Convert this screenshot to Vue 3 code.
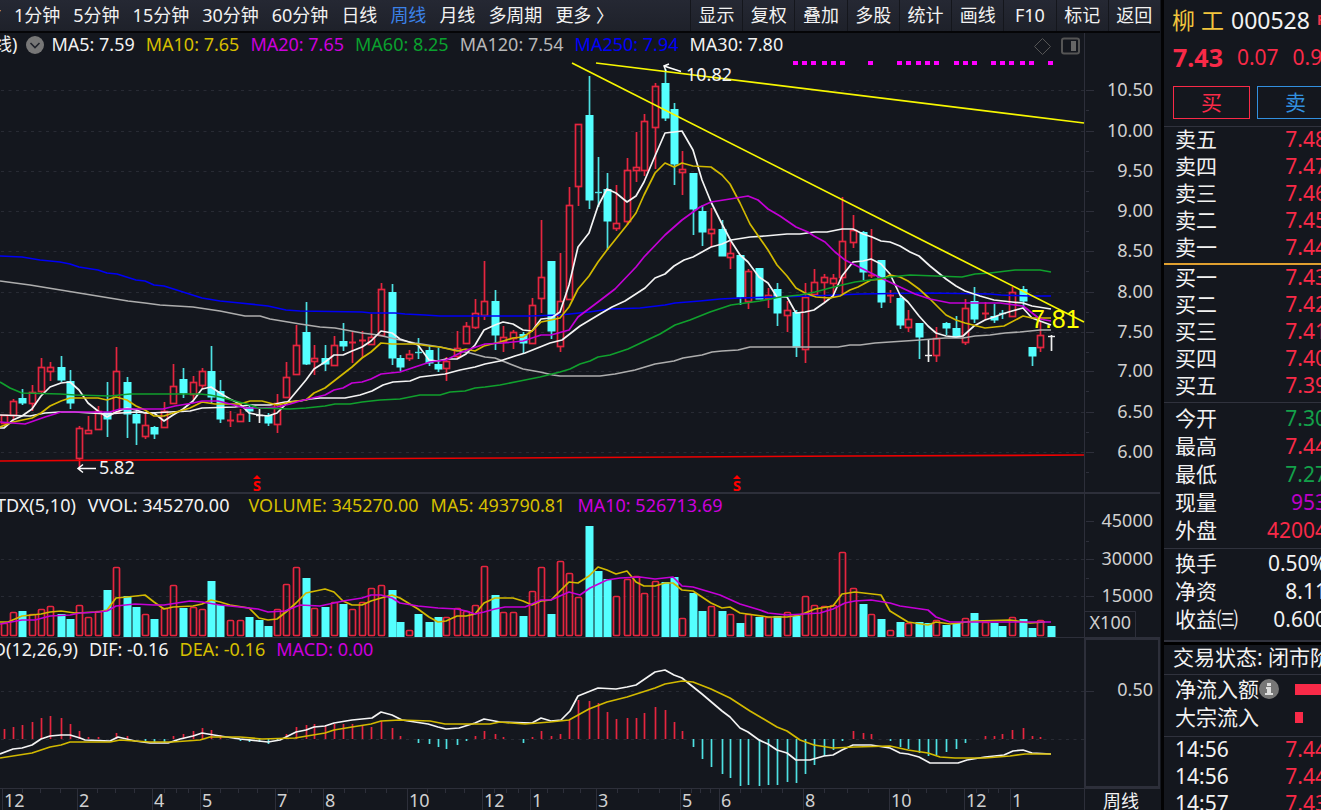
<script setup>
const periods = ['分时', '1分钟', '5分钟', '15分钟', '30分钟', '60分钟', '日线', '周线', '月线', '多周期', '更多 〉']
const tools = ['显示', '复权', '叠加', '多股', '统计', '画线', 'F10', '标记', '返回']

const maLegend = [
  ['MA5: 7.59', 'white'], ['MA10: 7.65', 'yellow'], ['MA20: 7.65', 'magenta'], ['MA60: 8.25', 'green'],
  ['MA120: 7.54', 'silver'], ['MA250: 7.94', 'blue'], ['MA30: 7.80', 'white']
]
const volLegend = [
  ['VVOL: 345270.00', 'white'], ['VOLUME: 345270.00', 'yellow wide'],
  ['MA5: 493790.81', 'yellow'], ['MA10: 526713.69', 'magenta']
]
const macdLegend = [['DIF: -0.16', 'white'], ['DEA: -0.16', 'yellow'], ['MACD: 0.00', 'magenta']]

// x, kind (r rising, c falling, w flat), high, low, body top, body bottom, volume top, macd end
const bars = `4 r 415 423 415 423 623 729
13 r 399 420 401 415 612 727
22 c 389 405 398 403 611 725
32 r 385 411 392 403 614 722
41 r 358 393 367 391 609 718
50 r 362 381 367 371 606 716
61 c 356 382 367 380 614 718
70 c 370 409 381 403 619 724
79 r 426 467 428 458 605 731
88 r 416 433 430 433 617 737
98 r 406 429 411 429 611 737
107 c 382 437 412 419 590 739
116 r 347 412 371 412 567 733
127 c 377 438 382 414 596 736
136 c 409 445 414 423 607 739
145 r 414 439 425 436 614 742
154 c 426 439 427 434 619 743
164 r 402 427 411 427 608 743
173 r 364 403 386 403 585 736
183 c 368 398 379 393 608 734
193 r 376 400 382 394 607 731
202 r 368 389 371 385 609 728
211 c 346 403 371 397 581 730
220 c 380 423 391 419 605 735
230 r 411 427 420 421 620 739
240 r 409 422 414 421 620 741
249 c 406 422 407 411 617 742
259 w 409 423 415 416 620 742
268 c 413 426 415 423 626 744
277 r 394 433 403 424 609 740
286 r 362 397 377 397 584 734
296 r 325 374 345 374 567 727
306 c 302 365 332 364 578 725
314 r 345 375 358 361 608 724
325 c 345 371 358 364 607 726
334 r 336 365 345 365 602 724
343 c 323 351 341 346 604 724
352 r 332 363 342 343 609 724
362 r 331 358 340 341 602 725
371 r 314 344 337 344 588 727
381 r 283 335 289 335 585 721
392 c 284 365 292 358 590 728
400 c 355 371 358 367 622 736
409 r 350 361 354 358 630 739
418 c 338 359 352 353 614 743
429 c 346 366 350 363 622 744
438 c 348 372 364 369 617 747
446 r 357 381 361 368 617 749
457 r 331 358 348 356 608 745
466 r 322 343 326 343 611 741
475 r 299 329 313 327 605 736
484 r 261 320 301 315 566 731
495 c 290 350 301 335 595 734
503 r 326 352 337 341 612 737
513 r 330 349 332 338 612 739
523 c 332 353 334 343 616 743
532 r 298 343 305 343 591 737
541 r 220 313 277 298 567 731
551 c 261 339 261 331 614 736
560 r 253 352 301 346 561 734
569 r 187 300 205 299 573 720
578 r 124 206 124 186 597 700
589 c 76 209 115 200 526 701
598 c 157 207 192 193 571 703
607 c 173 250 189 221 579 712
616 r 185 231 223 228 596 719
627 r 158 225 170 221 579 718
636 r 132 182 167 170 576 718
644 r 114 176 121 170 593 713
655 r 83 169 86 127 581 707
665 c 69 121 83 118 582 710
674 c 103 185 109 164 577 722
682 r 151 195 169 172 618 731
693 c 173 235 173 209 593 747
702 c 205 246 211 232 611 759
711 r 208 247 229 233 606 767
722 c 220 256 229 256 611 774
730 r 242 269 253 257 614 778
740 c 255 305 255 297 623 786
748 r 269 309 271 301 614 785
759 c 268 299 268 299 617 786
768 r 288 308 295 298 617 785
777 c 283 326 289 313 616 785
787 r 301 332 310 315 612 782
796 c 310 357 312 347 616 783
805 r 283 363 297 349 596 774
814 r 269 295 282 294 605 765
824 r 274 302 277 282 606 756
833 r 274 297 278 283 605 750
842 r 197 294 241 277 552 741
853 r 215 248 230 242 588 731
863 c 231 280 232 272 604 733
871 r 229 278 275 276 614 734
881 c 260 308 260 302 619 739
890 r 290 303 295 297 630 741
900 c 295 329 298 325 622 747
908 r 310 332 319 327 623 749
919 c 323 359 323 337 622 753
928 w 340 362 355 356 623 756
936 r 327 362 338 355 620 755
946 c 322 335 323 328 625 752
956 c 316 337 328 337 623 749
965 r 299 345 308 342 618 743
974 c 287 323 301 319 613 739
985 r 302 320 313 315 622 736
994 c 304 323 316 320 623 736
1002 c 310 319 313 315 626 734
1012 r 287 317 292 316 617 730
1023 c 286 309 289 301 619 728
1032 c 347 366 347 356 628 736
1040 r 322 352 335 347 620 737
1051 w 335 351 336 337 626 739`
  .split('\n')
  .map((row) => {
    const [x, kind, ...n] = row.trim().split(' ')
    const [high, low, top, bottom, vol, macd] = n.map(Number)
    return { x: Number(x), kind, high, low, top, bottom, vol, macd, flat: bottom - top <= 2 }
  })

const priceLines = [
  ['line-blue', '0,256 22,257 40,260 60,262 70,264 79,267 98,270 107,273 117,274 136,280 145,281 154,285 164,286 202,298 220,301 240,303 268,306 286,310 300,311 362,312 371,313 395,313 405,314 425,315 440,316 530,316 560,315 589,312 610,309 640,308 665,305 675,303 700,301 720,299 740,298 780,297 810,296 837,295 860,294 928,293 990,294 1001,295 1030,296 1051,296'],
  ['line-silver', '0,281 30,285 79,293 128,301 145,303 160,305 193,307 220,311 245,316 260,316 270,319 300,324 320,327 335,328 362,333 378,335 400,340 415,343 440,347 450,349 470,353 485,357 495,358 510,364 523,369 540,372 553,375 560,376 600,376 615,374 635,370 655,364 674,361 683,358 702,355 712,352 722,351 738,350 750,347 838,347 850,345 860,345 875,343 905,341 920,340 945,338 963,338 975,336 990,335 1005,333 1020,332 1040,330 1051,330'],
  ['line-red', '0,461 273,459 505,458 852,456 1084,455'],
  ['line-white', '0,415 30,416 45,413 60,412 75,412 107,414 135,412 150,413 190,411 202,408 235,407 250,405 270,405 285,402 300,401 310,399 320,398 345,398 360,395 372,391 383,385 393,382 410,381 420,377 445,374 460,370 475,367 485,364 500,361 515,356 525,353 540,347 550,343 562,340 580,326 600,314 612,307 625,301 645,288 655,278 665,274 674,266 684,260 693,257 711,247 722,244 731,240 750,237 765,236 787,234 800,234 815,232 827,232 842,229 853,229 863,234 872,237 881,241 890,242 900,246 910,252 919,256 930,266 946,279 956,286 965,291 980,296 994,300 1012,302 1023,303 1032,306 1051,309'],
  ['line-white', '0,428 4,428 13,420 22,416 32,409 41,396 50,387 61,383 70,382 79,390 88,403 98,411 107,417 116,412 127,408 136,410 145,413 154,413 164,421 173,415 183,409 193,401 202,389 211,387 220,393 230,399 240,404 249,413 259,415 268,416 277,413 286,404 296,392 306,380 314,369 325,362 334,355 343,355 352,351 362,347 371,341 381,331 392,333 400,339 409,342 418,345 429,360 438,361 446,359 457,359 466,354 475,345 484,330 495,325 503,322 513,324 523,330 532,331 541,319 551,318 560,312 569,285 578,247 589,233 598,206 607,189 616,193 627,202 636,196 644,182 655,156 665,133 674,132 682,131 693,150 702,180 711,202 722,224 731,241 740,255 748,262 759,277 768,283 777,297 787,297 796,313 805,312 814,310 824,303 833,296 842,276 853,262 863,261 871,259 881,264 890,274 900,295 908,302 919,316 928,326 936,333 946,336 956,337 963,336 974,326 985,320 994,317 1002,314 1012,311 1023,308 1032,318 1040,321 1051,325'],
  ['line-yellow', '0,427 13,422 32,418 41,413 50,406 61,401 70,398 98,398 107,400 116,397 127,400 136,406 145,410 154,416 164,416 173,413 190,408 202,402 215,404 240,404 250,401 262,401 277,405 296,401 306,400 314,393 325,388 334,381 343,374 352,367 362,358 371,352 381,343 392,344 415,344 429,346 440,347 457,351 466,349 475,351 484,346 500,342 513,338 523,337 532,331 541,322 551,320 560,318 569,307 578,289 589,276 598,262 607,250 627,225 636,213 644,195 655,173 665,163 674,167 682,163 693,166 711,167 722,175 730,184 740,203 750,224 768,250 777,265 787,276 796,288 805,293 816,297 830,298 840,296 850,290 858,287 871,280 883,279 890,275 900,277 908,281 919,289 930,299 938,307 946,315 956,320 965,323 985,328 1004,326 1023,316 1032,318 1051,318'],
  ['line-magenta', '0,422 25,424 45,417 61,412 110,412 120,409 163,409 175,406 193,403 202,401 218,401 230,404 245,408 260,408 277,407 290,404 300,401 325,395 334,390 343,388 352,383 362,382 371,379 381,374 400,372 415,367 430,362 446,360 460,353 470,349 485,344 503,343 523,341 541,335 551,335 569,330 578,317 598,302 615,289 636,267 644,257 665,235 682,220 700,207 711,202 730,199 748,196 758,200 768,209 780,216 796,227 808,232 814,236 825,242 835,252 845,260 863,269 881,278 900,287 915,294 930,299 950,303 1000,303 1023,306 1040,319 1051,321'],
  ['line-green', '0,382 10,388 22,393 60,394 75,395 110,396 130,394 200,394 210,395 220,397 235,401 250,405 258,408 290,409 306,408 325,406 335,404 350,404 362,402 380,400 400,399 420,395 440,395 450,392 465,391 475,388 485,387 500,385 520,381 540,377 560,372 570,369 580,364 590,361 598,357 610,355 628,349 645,341 660,334 675,325 690,320 710,312 731,305 760,301 780,297 800,295 815,292 830,288 842,285 855,282 870,280 890,277 910,275 962,277 975,274 990,273 1015,270 1040,270 1051,272'],
  ['line-trend', '572,63 1084,322'],
  ['line-trend', '596,63 1084,123']
]
const volLines = [
  ['line-yellow', '0,622 8,622 22,616 41,614 50,612 61,611 75,613 98,612 107,610 116,598 127,597 145,595 154,602 164,609 173,607 193,606 202,604 211,600 220,602 230,605 249,608 259,618 268,620 277,619 286,612 296,603 306,593 325,589 334,592 343,601 352,605 362,605 371,601 381,598 392,595 400,598 418,609 429,617 438,622 446,621 457,616 466,616 475,614 484,603 495,598 513,598 523,601 532,605 541,601 551,600 560,591 569,582 578,583 589,576 598,567 607,570 616,574 627,571 636,582 644,586 655,586 665,583 673,583 682,590 693,591 702,597 711,603 722,608 730,607 740,613 768,617 787,617 800,615 815,609 833,606 842,594 855,592 881,595 890,611 908,622 928,625 936,622 950,624 975,621 1010,620 1030,623 1045,622'],
  ['line-magenta', '0,624 22,620 35,620 50,616 70,615 80,613 98,612 107,611 116,606 135,604 154,605 164,605 190,601 202,602 220,605 240,607 258,609 268,612 285,611 300,605 320,606 343,601 362,598 371,595 381,595 392,598 400,603 418,606 438,608 457,609 466,611 475,614 484,612 495,609 505,607 525,607 541,600 551,600 569,592 580,595 590,588 607,580 620,578 640,577 655,579 673,577 682,586 693,587 720,595 740,604 760,610 768,613 787,615 820,613 833,609 845,603 855,601 871,600 890,603 900,606 928,610 936,617 950,622 1051,622']
]
const macdLines = [
  ['line-white', '0,754 13,749 22,748 32,745 41,739 50,736 61,735 70,735 80,738 85,740 110,741 118,737 135,741 150,743 168,743 180,739 193,736 202,733 220,736 240,739 268,742 280,740 290,735 296,732 306,730 314,727 325,726 334,723 352,720 372,718 381,712 392,715 402,720 428,724 438,727 446,729 459,728 475,723 484,719 500,722 532,723 541,718 551,721 561,720 570,711 578,696 598,688 616,689 627,687 636,685 655,672 665,670 674,675 682,678 702,694 722,711 730,717 740,728 748,732 759,740 768,744 777,750 787,753 796,760 810,760 824,756 833,755 842,750 853,745 871,745 890,748 900,753 908,754 919,757 930,763 958,763 967,760 985,757 1004,755 1013,751 1023,750 1032,753 1051,754'],
  ['line-yellow', '0,758 32,753 50,747 61,745 70,742 110,742 120,740 150,742 172,742 200,740 210,737 240,737 262,739 295,738 325,733 334,730 352,727 371,724 381,721 400,720 430,721 445,724 490,724 500,722 525,724 550,722 569,720 589,709 607,702 627,697 655,688 665,684 682,681 693,682 711,689 730,698 750,711 777,727 787,731 800,740 814,745 833,748 855,747 890,746 908,750 928,753 940,757 955,758 985,758 1010,756 1025,754 1051,754']
]

const priceTicks = [[90.5, '10.50'], [131.5, '10.00'], [171.5, '9.50'], [211.5, '9.00'], [251.5, '8.50'], [292.5, '8.00'], [332.5, '7.50'], [371.5, '7.00'], [412.5, '6.50'], [452.5, '6.00']]
const volTicks = [[521.5, '45000'], [559.5, '30000'], [596.5, '15000']]
const signals = [795, 804, 813, 824, 833, 842, 870, 899, 908, 918, 927, 936, 956, 965, 974, 993, 1002, 1011, 1022, 1031, 1050]
const months = [[2, '12'], [77, '2'], [152, '4'], [200, '5'], [275, '7'], [323, '8'], [407, '10'], [482, '12'], [530, '1'], [596, '3'], [680, '5'], [719, '6'], [803, '8'], [889, '10'], [964, '12'], [1010, '1']]
const minorMonths = [22, 40, 60, 97, 115, 134, 164, 176, 188, 220, 238, 257, 287, 299, 311, 344, 365, 386, 427, 445, 464, 494, 506, 518, 547, 563, 580, 617, 638, 659, 691, 700, 710, 740, 761, 782, 824, 847, 868, 908, 926, 946, 976, 988, 998]

const asks = [['卖五', '7.48'], ['卖四', '7.47'], ['卖三', '7.46'], ['卖二', '7.45'], ['卖一', '7.44']]
const bids = [['买一', '7.43'], ['买二', '7.42'], ['买三', '7.41'], ['买四', '7.40'], ['买五', '7.39']]
const stats = [['今开', '7.30', 'down'], ['最高', '7.44', 'up'], ['最低', '7.27', 'down'], ['现量', '953', 'violet'], ['外盘', '42004', 'up']]
const ratios = [['换手', '0.50%'], ['净资', '8.11'], ['收益㈢', '0.600']]
const deals = [['14:56', '7.44'], ['14:56', '7.44'], ['14:57', '7.43']]
</script>

<template>
  <div class="terminal">
    <main class="workspace">
      <header class="toolbar">
        <nav class="periods">
          <button v-for="p in periods" :key="p" type="button" :class="{ active: p === '周线' }">{{ p }}</button>
        </nav>
        <div class="tools">
          <button v-for="t in tools" :key="t" type="button">{{ t }}</button>
        </div>
      </header>

      <section class="pane">
        <div class="legend ma">
          <span class="white cut">线)</span>
          <button class="fold" type="button" aria-label="展开">
            <svg viewBox="0 0 18 18"><circle cx="9" cy="9" r="9" fill="#777" /><path d="M4.5 7 9 11.5 13.5 7" fill="none" stroke="#20232b" stroke-width="1.6" /></svg>
          </button>
          <span v-for="[t, c] in maLegend" :key="t" :class="c">{{ t }}</span>
        </div>
        <svg class="plot" viewBox="0 33 1160 460">
          <g class="grid">
            <line v-for="[y] in priceTicks" :key="y" x1="1" x2="1084" :y1="y" :y2="y" />
          </g>
          <g class="frame">
            <path d="M1084.5 33V493" />
            <path d="M0 493H1160" stroke-width="2" />
            <path v-for="[y] in priceTicks" :key="y" :d="`M1086 ${y}h8M1086 ${y + 20}h3`" />
          </g>
          <g v-for="b in bars" :key="b.x" :class="b.kind">
            <template v-if="b.flat">
              <path :d="`M${b.x + 0.5} ${b.high}V${b.low}`" />
              <path :d="`M${b.x - 3} ${b.top + 0.5}h7`" :stroke-width="b.kind === 'r' ? 2 : 1.4" />
            </template>
            <template v-else>
              <path :d="`M${b.x + 0.5} ${b.high}V${b.top}M${b.x + 0.5} ${b.bottom}V${b.low}`" />
              <rect v-if="b.kind === 'r'" :x="b.x - 2.5" :y="b.top + 0.5" width="6" :height="b.bottom - b.top" />
              <rect v-else class="solid" :x="b.x - 3.5" :y="b.top" width="8" :height="b.bottom - b.top + 0.5" />
            </template>
          </g>
          <polyline v-for="[c, pts] in priceLines" :key="pts" :class="c" :points="pts" />
          <rect v-for="x in signals" :key="x" :x="x - 2" y="61" width="5" height="4" fill="#ff00ff" />
          <g class="arrow">
            <path d="M681 71.5 664 66M669 64 664 66 666 71" />
            <path d="M96 468.5H78M83 464.5 78 468.5 83 472.5" />
          </g>
          <text class="note" x="686" y="81">10.82</text>
          <text class="note" x="99" y="474">5.82</text>
          <text class="last" x="1031" y="328">7.81</text>
          <g v-for="x in [257, 737]" :key="x" class="event">
            <path :d="`M${x - 4} 479 ${x} 475 ${x + 4} 479Z`" />
            <text :x="x" y="491">S</text>
          </g>
          <g fill="none" stroke="#555">
            <path d="M1042.500 38.500 1050.500 46.500 1042.500 54.500 1034.500 46.500Z" />
            <rect x="1062" y="38.500" width="17" height="15" rx="2" stroke-width="2" />
            <rect x="1071" y="41" width="5" height="10" fill="#666" stroke="none" />
          </g>
          <text v-for="[y, t] in priceTicks" :key="t" class="scale" x="1153" :y="y + 5">{{ t }}</text>
        </svg>
      </section>

      <section class="pane">
        <div class="legend vol">
          <span class="white cut">TDX(5,10)</span>
          <span v-for="[t, c] in volLegend" :key="t" :class="c">{{ t }}</span>
        </div>
        <svg class="plot" viewBox="0 493 1160 145">
          <g class="grid">
            <line v-for="y in [559.5, 596.5]" :key="y" x1="1" x2="1084" :y1="y" :y2="y" />
          </g>
          <g class="frame">
            <path d="M0 493H1160" stroke-width="2" />
            <path d="M1084.5 493V638M0 637.5H1160M1084.5 611.500H1135.500V637" />
            <path v-for="[y] in volTicks" :key="y" :d="`M1086 ${y}h8`" />
            <path d="M1086 541.500h3M1086 578.500h3" />
          </g>
          <g v-for="b in bars" :key="b.x" :class="b.kind === 'w' ? 'c' : b.kind">
            <rect v-if="b.kind === 'r'" :x="b.x - 2.5" :y="b.vol + 0.5" width="6" :height="635 - b.vol" rx="1" />
            <rect v-else class="solid" :x="b.x - 3.5" :y="b.vol" width="8" :height="637 - b.vol" />
          </g>
          <polyline v-for="[c, pts] in volLines" :key="pts" :class="c" :points="pts" />
          <text v-for="[y, t] in volTicks" :key="t" class="scale" x="1153" :y="y + 5">{{ t }}</text>
          <text class="scale" x="1131" y="629">X100</text>
        </svg>
      </section>

      <section class="pane">
        <div class="legend macd">
          <span class="white cut">MACD(12,26,9)</span>
          <span v-for="[t, c] in macdLegend" :key="t" :class="c">{{ t }}</span>
        </div>
        <svg class="plot" viewBox="0 638 1160 150">
          <g class="grid">
            <line v-for="y in [691.5, 739.5]" :key="y" x1="1" x2="1084" :y1="y" :y2="y" />
          </g>
          <g class="frame">
            <rect x="1085" y="639" width="74" height="148" stroke-width="2" />
            <path d="M1086 691.500h8" />
          </g>
          <g v-for="b in bars" :key="b.x" :class="b.macd > 739 ? 'c' : 'r'">
            <path v-if="b.macd !== 739" :d="`M${b.x + 0.5} 739V${b.macd}`" />
          </g>
          <polyline v-for="[c, pts] in macdLines" :key="pts" :class="c" :points="pts" />
          <text class="scale" x="1153" y="696">0.50</text>
        </svg>
      </section>

      <footer class="pane">
        <svg class="plot" viewBox="0 788 1160 22">
          <g class="frame">
            <path d="M0 788.500H1160M1084.500 788V810" />
            <path v-for="[x] in months" :key="x" :d="`M${x + 0.5} 789V810`" />
            <path v-for="x in minorMonths" :key="x" :d="`M${x + 0.5} 789v4`" />
          </g>
          <text v-for="[x, t] in months" :key="x" class="month" :x="x + 2" y="807">{{ t }}</text>
          <text class="month bright" x="1103" y="808">周线</text>
        </svg>
      </footer>
    </main>

    <aside class="sidebar">
      <h1 class="stock"><span class="name">柳 工</span><span>000528</span><sup>R</sup></h1>
      <p class="quote up"><strong>7.43</strong><span>0.07</span><span>0.95%</span></p>
      <div class="actions">
        <button class="buy" type="button">买</button>
        <button class="sell" type="button">卖</button>
      </div>
      <table class="book asks">
        <tbody><tr v-for="[k, v] in asks" :key="k"><th scope="row">{{ k }}</th><td class="up">{{ v }}</td></tr></tbody>
      </table>
      <table class="book bids">
        <tbody><tr v-for="[k, v] in bids" :key="k"><th scope="row">{{ k }}</th><td class="up">{{ v }}</td></tr></tbody>
      </table>
      <table class="stats">
        <tbody><tr v-for="[k, v, c] in stats" :key="k"><th scope="row">{{ k }}</th><td :class="c">{{ v }}</td></tr></tbody>
      </table>
      <table class="stats ratios">
        <tbody><tr v-for="[k, v] in ratios" :key="k"><th scope="row">{{ k }}</th><td>{{ v }}</td></tr></tbody>
      </table>
      <p class="status">交易状态: 闭市阶段</p>
      <div class="flows">
        <div class="flow"><span>净流入额</span><svg class="info" viewBox="0 0 20 20"><circle cx="10" cy="10" r="10" fill="#777" /><path d="M8 4h4v3H8ZM7 8h5v6h2v2H6v-2h2v-4H7Z" fill="#ddd" /></svg><i class="bar"></i></div>
        <div class="flow"><span>大宗流入</span><i class="bar small"></i></div>
      </div>
      <table class="book deals">
        <tbody><tr v-for="([k, v], i) in deals" :key="i"><th scope="row">{{ k }}</th><td class="up">{{ v }}</td></tr></tbody>
      </table>
    </aside>
  </div>
</template>

<style>
body { background: #14171e; }
</style>

<style scoped>
.terminal {
  display: flex;
  height: 100vh;
  overflow: hidden;
  background: #14171e;
  color: #f2f2f2;
  font: 18px/24px "Noto Sans", "Noto Sans CJK SC", sans-serif;
}
button { padding: 0; border: 0; background: none; color: inherit; font: inherit; white-space: nowrap; }
.workspace {
  flex: 1;
  min-width: 0;
  display: grid;
  grid-template-rows: 33px 460fr 145fr 150fr 22fr;
  border-right: 1px solid #14171e;
}
.toolbar {
  display: flex;
  justify-content: space-between;
  background: linear-gradient(#252833, #1e212a);
  border-bottom: 2px solid #050507;
  overflow: hidden;
}
.toolbar button { padding-bottom: 2px; }
.periods { display: flex; gap: 13px; margin-left: -35px; }
.periods .active { color: #3b82e8; }
.tools { display: flex; flex: 0 0 470px; }
.tools button { flex: 1; border-left: 1px solid #14161c; }
.pane { position: relative; min-height: 0; overflow: hidden; }
.plot { display: block; width: 100%; height: 100%; }
.legend { position: absolute; top: 0; left: 0; display: flex; align-items: center; gap: 11px; line-height: 22px; white-space: nowrap; }
.ma .cut { margin-left: -6px; }
.vol .cut { margin-left: -4px; }
.macd .cut { margin-left: -46px; }
.vol { gap: 12px; line-height: 24px; }
.vol .wide { margin-left: 7px; }
.fold { display: block; width: 18px; height: 18px; margin: 2px -4px 0 -2px; }
.fold svg { display: block; }
.white { color: #f2f2f2; }
.yellow { color: #d6bf00; }
.magenta { color: #cc00dd; }
.green { color: #0aa12e; }
.silver { color: #b8b8b8; }
.blue { color: #0000fa; }

.grid line { stroke: #282b34; stroke-dasharray: 3 4.500; }
.frame { fill: none; stroke: #2d2f3a; }
polyline { fill: none; stroke-width: 1.700; stroke-linejoin: round; }
.line-white { stroke: #f4f4f4; }
.line-yellow { stroke: #d2b900; }
.line-magenta { stroke: #c400d6; }
.line-green { stroke: #10a02d; }
.line-silver { stroke: #adadad; }
.line-blue { stroke: #0000f5; }
.line-red { stroke: #ee0000; }
.line-trend { stroke: #f7f700; }
.r, .c, .w { fill: none; stroke-width: 1.700; }
.r { stroke: #e5253f; }
.c { stroke: #4de0e2; }
.w { stroke: #eee; }
.solid { fill: #54ffff; stroke: none; }
.arrow { fill: none; stroke: #fff; stroke-width: 1.500; }
.note { fill: #f2f2f2; font-size: 18px; }
.last { fill: #ffff00; font: 25px "Liberation Sans", sans-serif; }
.event { fill: #f00; }
.event text { font-size: 15px; font-weight: 700; text-anchor: middle; }
.scale { fill: #d0d0d0; font-size: 18px; text-anchor: end; }
.month { fill: #d0d0d0; font-size: 18px; }
.bright { fill: #f2f2f2; }

.sidebar {
  flex: 0 0 157px;
  border-left: 3px solid #030304;
  overflow: hidden;
  font-size: 21px;
  white-space: nowrap;
}
.stock { display: flex; align-items: center; gap: 7px; height: 39px; margin: 0; padding: 0 0 2px 8px; font-size: 23px; font-weight: 400; }
.name { color: #f2c53d; font-size: 23px; }
.stock sup { color: #f5364a; font-size: 14px; font-weight: 700; line-height: 16px; }
.quote { display: flex; align-items: center; gap: 14px; height: 31px; margin: 0; padding: 0 0 1px 9px; }
.quote strong { font-size: 25px; }
.up { color: #f92a48; }
.down { color: #13a04a; }
.violet { color: #bd00c8; }
.actions { display: flex; gap: 7px; padding: 13px 0 7px 9px; }
.actions button { flex: 0 0 77px; height: 33px; padding-bottom: 2px; border: 1px solid; }
.buy { color: #f92a48; }
.sell { color: #3290df; }
table { width: calc(100% + 6px); border-collapse: separate; border-spacing: 0; }
th { padding: 0 0 0 11px; font-weight: 400; text-align: left; }
td { padding: 0; text-align: right; }
.book tr { height: 27px; }
.book th, .book td { padding-bottom: 3px; }
.stats tr { height: 28px; }
.asks { padding-bottom: 1px; border-top: 1px solid #30323d; border-bottom: 2px solid #e0a030; }
.bids { padding-bottom: 2px; border-bottom: 1px solid #30323d; }
.stats { padding: 1px 0 4px; }
.ratios { padding: 0 0 7px; border-top: 1px solid #30323d; border-bottom: 2px solid #30323d; }
.status { margin: 0; padding: 0 0 5px 9px; border-top: 3px solid #000; border-bottom: 1px solid #30323d; }
.flows { padding: 0 0 5px 11px; border-bottom: 1px solid #30323d; }
.flow { display: flex; align-items: center; height: 28px; }
.info { width: 20px; height: 20px; }
.bar { flex: 1; height: 11px; margin-left: 16px; background: #f92a48; }
.small { flex: 0 0 8px; margin-left: 36px; }
</style>
